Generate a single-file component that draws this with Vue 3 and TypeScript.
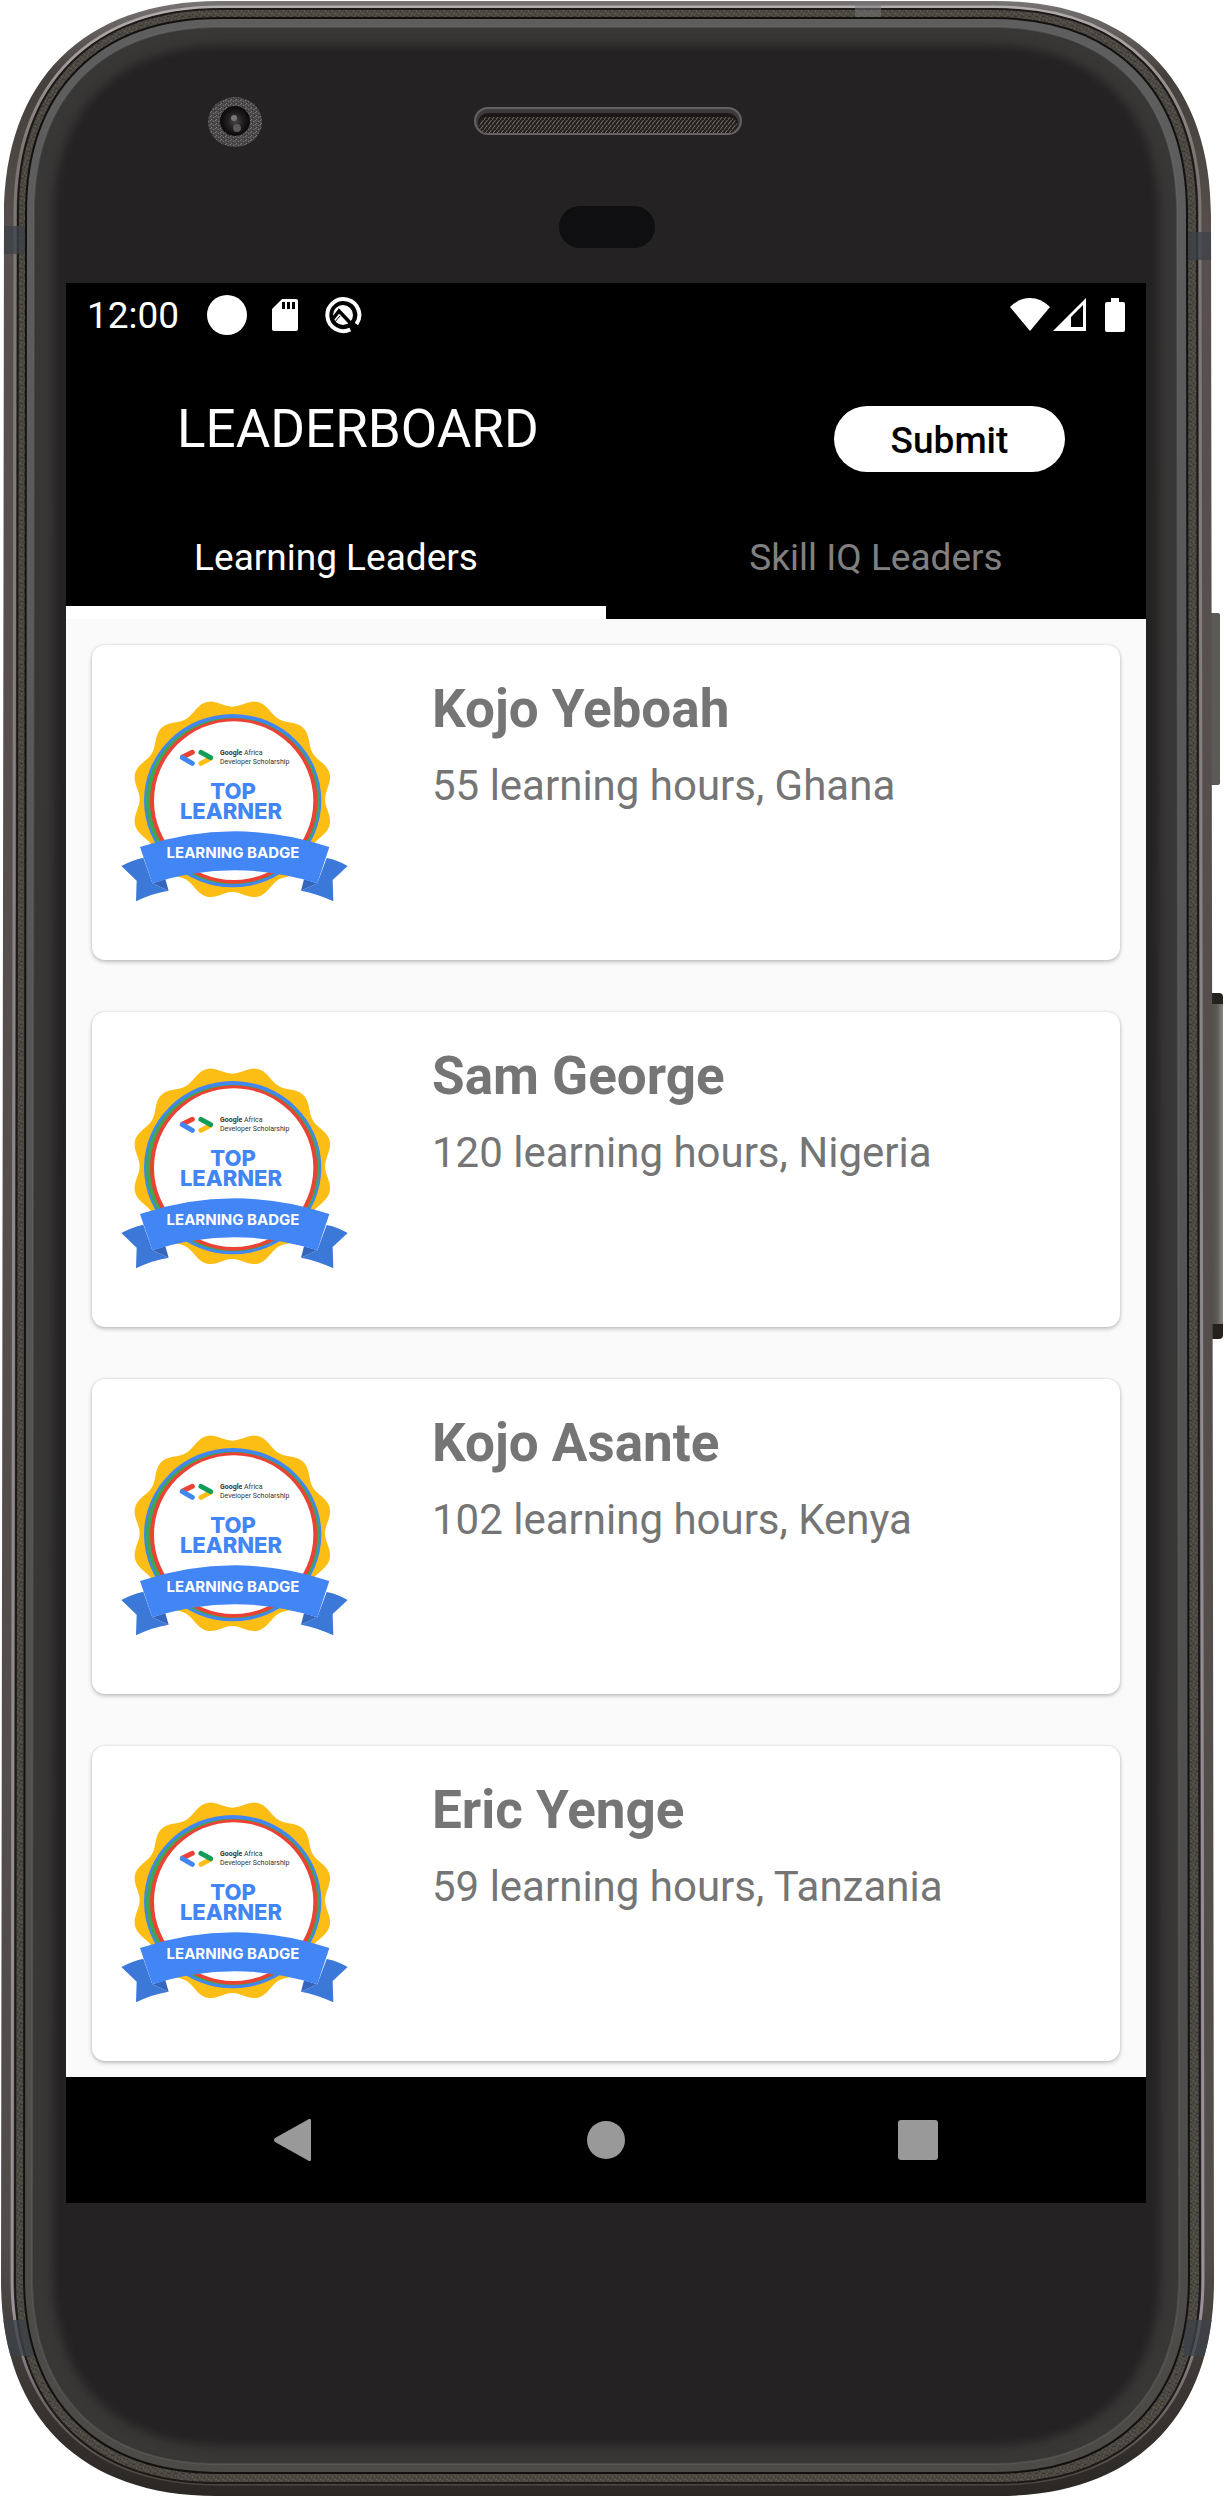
<script setup lang="ts">
import { ref } from 'vue'

interface Leader {
  name: string
  hours: number
  country: string
}

const tabs = ['Learning Leaders', 'Skill IQ Leaders']
const activeTab = ref(0)

const leaders: Leader[] = [
  { name: 'Kojo Yeboah', hours: 55, country: 'Ghana' },
  { name: 'Sam George', hours: 120, country: 'Nigeria' },
  { name: 'Kojo Asante', hours: 102, country: 'Kenya' },
  { name: 'Eric Yenge', hours: 59, country: 'Tanzania' },
]

// Closed outline of the phone body; the sides lean out by `lean` towards the bottom.
function shell(left: number, top: number, right: number, bottom: number, r: number, lean = 3): string {
  const k = r * 0.37
  const lb = left - lean
  const rb = right + lean
  return [
    `M${left} ${top + r}`,
    `C${left} ${top + k} ${left + k} ${top} ${left + r} ${top}`,
    `L${right - r} ${top}`,
    `C${right - k} ${top} ${right} ${top + k} ${right} ${top + r}`,
    `L${rb} ${bottom - r}`,
    `C${rb} ${bottom - k} ${rb - k} ${bottom} ${rb - r} ${bottom}`,
    `L${lb + r} ${bottom}`,
    `C${lb + k} ${bottom} ${lb} ${bottom - k} ${lb} ${bottom - r}`,
    'Z',
  ].join(' ')
}

const body = shell(4, 1, 1211, 2496, 215)
const rim = shell(15, 7, 1200, 2484, 206)
const grain = shell(18, 9, 1197, 2483, 203)
const glassEdge = shell(26, 18, 1187, 2473, 195, 2)
const glass = shell(34, 27, 1177, 2464, 186, 2)
const face = shell(54, 45, 1159, 2446, 172, 1)

// Twelve-lobed rosette behind the badge.
function rosette(cx: number, cy: number, radius: number, wave: number): string {
  const points: string[] = []
  for (let deg = 0; deg < 360; deg += 2) {
    const a = (deg * Math.PI) / 180
    const r = radius - wave * Math.cos(12 * a)
    points.push(`${(cx + r * Math.sin(a)).toFixed(1)},${(cy - r * Math.cos(a)).toFixed(1)}`)
  }
  return points.join(' ')
}

const scallop = rosette(367, 328, 290, 12)
</script>

<template>
  <main class="phone">
    <svg class="chassis" viewBox="0 0 1224 2498" preserveAspectRatio="none" aria-hidden="true">
      <defs>
        <linearGradient id="metal" x1="0" y1="0" x2="0" y2="1">
          <stop offset="0" stop-color="#777373" />
          <stop offset="0.03" stop-color="#45403c" />
          <stop offset="0.1" stop-color="#57504e" />
          <stop offset="0.9" stop-color="#514b49" />
          <stop offset="1" stop-color="#2b2724" />
        </linearGradient>
        <linearGradient id="shine" x1="0" y1="0" x2="0" y2="1">
          <stop offset="0" stop-color="#b3aeae" />
          <stop offset="0.06" stop-color="#7b7573" />
          <stop offset="0.5" stop-color="#8d888b" />
          <stop offset="0.93" stop-color="#979297" />
          <stop offset="1" stop-color="#4a4641" />
        </linearGradient>
        <linearGradient id="bevel" x1="0" y1="0" x2="0" y2="1">
          <stop offset="0" stop-color="#5f5e5e" />
          <stop offset="0.5" stop-color="#555555" />
          <stop offset="1" stop-color="#4b4a46" />
        </linearGradient>
        <linearGradient id="key" x1="0" y1="0" x2="1" y2="0">
          <stop offset="0" stop-color="#4a4742" />
          <stop offset="0.6" stop-color="#5d5a55" />
          <stop offset="1" stop-color="#8a8583" />
        </linearGradient>
        <radialGradient id="lens">
          <stop offset="0" stop-color="#4a4848" />
          <stop offset="0.5" stop-color="#222020" />
          <stop offset="1" stop-color="#0a0909" />
        </radialGradient>
        <pattern id="speckle" width="7" height="9" patternUnits="userSpaceOnUse">
          <rect width="7" height="9" fill="#4b4841" />
          <path d="M0 0h1v1H0zM3 1h1v2H3zM5 4h2v1H5zM1 5h1v1H1zM4 7h1v1H4z" fill="#5d5a52" />
          <path d="M1 2h1v1H1zM5 1h1v1H5zM3 5h1v1H3zM0 7h2v1H0zM6 7h1v1H6z" fill="#3a3731" />
        </pattern>
        <pattern id="mesh" width="4" height="5" patternUnits="userSpaceOnUse">
          <rect width="4" height="5" fill="#24211f" />
          <path d="M-1 6L5 -2M-1 1L1 -1M3 6L5 4" stroke="#77736f" stroke-width="1" />
        </pattern>
        <pattern id="grit" width="5" height="4" patternUnits="userSpaceOnUse">
          <rect width="5" height="4" fill="#4c4a4b" />
          <path d="M0 0h1v1H0zM3 1h1v1H3zM1 3h1v1H1z" fill="#777475" />
          <path d="M2 2h1v1H2zM4 3h1v1H4z" fill="#343233" />
        </pattern>
        <filter id="soft" x="-5%" y="-5%" width="110%" height="110%" color-interpolation-filters="sRGB">
          <feGaussianBlur stdDeviation="5" />
        </filter>
        <clipPath id="body-clip"><path :d="body" /></clipPath>
      </defs>

      <rect x="1208" y="613" width="12" height="172" rx="2" fill="#5b5a56" />
      <rect x="1208" y="993" width="15" height="346" rx="4" fill="#24211f" />
      <rect x="1208" y="1004" width="15" height="320" rx="1" fill="url(#key)" />

      <path :d="body" fill="url(#metal)" />
      <path :d="rim" fill="none" stroke="url(#shine)" stroke-width="3" />
      <path :d="grain" fill="url(#speckle)" stroke="#1c1917" stroke-width="2" />
      <g clip-path="url(#body-clip)" fill="#3c4148" fill-opacity="0.75">
        <rect x="0" y="226" width="30" height="28" />
        <rect x="1186" y="232" width="30" height="28" />
        <rect x="855" y="0" width="26" height="17" fill="#77777a" fill-opacity="0.5" />
        <rect x="0" y="2320" width="40" height="36" />
        <rect x="1184" y="2320" width="40" height="36" />
      </g>
      <path :d="glassEdge" fill="url(#bevel)" stroke="#12110f" stroke-width="2" />
      <path :d="glass" fill="#383735" stroke="#6c6c6c" stroke-opacity="0.35" stroke-width="2" />
      <path :d="face" fill="#242223" filter="url(#soft)" />

      <ellipse cx="235" cy="122" rx="27" ry="25" fill="url(#grit)" />
      <circle cx="235" cy="121" r="15" fill="url(#lens)" />
      <circle cx="234" cy="118" r="3" fill="#777" />
      <circle cx="237" cy="128" r="4" fill="#5b5959" />

      <rect x="475" y="108" width="266" height="26" rx="13" fill="#3c3a3b" stroke="#636161" stroke-width="2" />
      <rect x="478" y="113" width="260" height="20" rx="10" fill="#1b1817" />
      <rect x="479" y="117" width="258" height="16" rx="8" fill="url(#mesh)" />
      <rect x="559" y="206" width="96" height="42" rx="21" fill="#0f0f11" />
    </svg>

    <section class="screen">
      <div class="status">
        <span class="clock">12:00</span>
        <svg class="dot" viewBox="0 0 40 40" aria-hidden="true"><circle cx="20" cy="20" r="20" /></svg>
        <svg class="card-icon" viewBox="0 0 26 32" aria-hidden="true">
          <path fill-rule="evenodd" d="M10 0H24Q26 0 26 2V30Q26 32 24 32H2Q0 32 0 30V10ZM10 3V10H13V3ZM15 3V10H18V3ZM20 3V10H23V3Z" />
        </svg>
        <svg class="q-icon" viewBox="-19 -19 38 38" aria-hidden="true">
          <path d="M9 13.5A16 16 0 1 1 14.5 7.5" fill="none" stroke="#fff" stroke-width="4" transform="rotate(7)" />
          <circle r="10" />
          <path d="M-11 5L-4 -4L13 14" fill="none" stroke="#000" stroke-width="3.5" />
          <path d="M-9 8L-3 1" fill="none" stroke="#000" stroke-width="1" />
        </svg>
        <svg class="wifi" viewBox="0 0 40 33" aria-hidden="true">
          <path d="M20 33L0 9Q9 0 20 0T40 9Z" />
        </svg>
        <svg class="signal" viewBox="0 0 33 33" aria-hidden="true">
          <path fill-rule="evenodd" d="M0 33L33 0V33ZM18 19V29H30V7Z" />
        </svg>
        <svg class="battery" viewBox="0 0 20 34" aria-hidden="true">
          <path d="M6 0H14V4H18Q20 4 20 6V32Q20 34 18 34H2Q0 34 0 32V6Q0 4 2 4H6Z" />
        </svg>
      </div>

      <header class="app-bar">
        <h1>LEADERBOARD</h1>
        <button class="submit" type="button">Submit</button>
      </header>

      <nav class="tabs" role="tablist" aria-label="Leaderboards">
        <button
          v-for="(tab, i) in tabs"
          :key="tab"
          type="button"
          role="tab"
          class="tab"
          :class="{ active: i === activeTab }"
          :aria-selected="i === activeTab"
          @click="activeTab = i"
        >
          {{ tab }}
        </button>
      </nav>

      <ul class="leaders">
        <li v-for="leader in leaders" :key="leader.name" class="leader">
          <svg class="badge" viewBox="0 0 250 220" role="img" aria-label="Top learner badge">
            <g transform="scale(0.33333)">
              <polygon :points="scallop" fill="#fcbe14" />
              <ellipse cx="368" cy="332" rx="266" ry="260" fill="#4285f4" />
              <ellipse cx="368" cy="333" rx="260" ry="250" fill="#3fa652" />
              <ellipse cx="371" cy="333" rx="251" ry="248" fill="#ea4335" />
              <ellipse cx="371" cy="332" rx="239" ry="238" fill="#fff" />
              <g fill="none" stroke-width="15" stroke-linecap="round">
                <path d="M247 187L218 201" stroke="#ea4335" />
                <path d="M217 203L247 220" stroke="#4285f4" />
                <path d="M273 220L301 205" stroke="#fcbe14" />
                <path d="M273 187L302 203" stroke="#0f9d58" />
              </g>
              <g fill="#3c78d8">
                <path d="M34 528Q64 511 100 503L127 580L176 602Q126 610 78 634L80 572Z" />
                <path d="M713 528Q685 511 650 504L622 580L573 602Q621 611 670 634L668 570Z" />
              </g>
              <g fill="#3566bd">
                <path d="M127 580L166 568L176 602Z" />
                <path d="M622 580L582 568L573 602Z" />
              </g>
              <path d="M90 471Q374 377 658 471L622 580Q374 501 127 580Z" fill="#4285f4" />
            </g>
            <text class="org">
              <tspan class="org-name" x="110" y="65">Google</tspan> Africa
              <tspan x="110" y="74">Developer Scholarship</tspan>
            </text>
            <text class="award">
              <tspan x="123" y="109">TOP</tspan>
              <tspan x="121" y="129">LEARNER</tspan>
            </text>
            <text class="ribbon" x="123" y="168">LEARNING BADGE</text>
          </svg>
          <div class="details">
            <h2>{{ leader.name }}</h2>
            <p>{{ leader.hours }} learning hours, {{ leader.country }}</p>
          </div>
        </li>
      </ul>

      <footer class="system-nav">
        <button type="button" aria-label="Back">
          <svg viewBox="0 0 42 42" aria-hidden="true"><path d="M36 0Q38 -1 38 2V40Q38 43 36 42L2 23Q0 21 2 19Z" /></svg>
        </button>
        <button type="button" aria-label="Home">
          <svg viewBox="0 0 42 42" aria-hidden="true"><circle cx="21" cy="21" r="19" /></svg>
        </button>
        <button type="button" aria-label="Recent apps">
          <svg viewBox="0 0 42 42" aria-hidden="true"><rect x="1" y="1" width="40" height="40" rx="3" /></svg>
        </button>
      </footer>
    </section>
  </main>
</template>

<style>
body {
  margin: 0;
  background: #fff;
}
</style>

<style scoped>
.phone {
  position: relative;
  box-sizing: border-box;
  padding: 283px 78px 295px 66px;
  font-family: Roboto, 'Liberation Sans', sans-serif;
}

.chassis {
  position: absolute;
  inset: 0;
  width: 100%;
  height: 100%;
}

.screen {
  position: relative;
  background: #000;
  color: #fff;
}

button {
  border: 0;
  padding: 0;
  font-family: inherit;
  cursor: pointer;
}

.status {
  display: flex;
  align-items: center;
  height: 63px;
  padding: 0 21px;
}

.status svg {
  flex: none;
  fill: #fff;
}

.clock {
  padding-top: 2px;
  font-size: 37px;
  line-height: 44px;
}

.dot {
  width: 40px;
  height: 40px;
  margin-left: 28px;
}

.card-icon {
  width: 26px;
  height: 32px;
  margin-left: 25px;
}

.q-icon {
  width: 38px;
  height: 38px;
  margin-left: 26px;
}

.wifi {
  width: 40px;
  height: 33px;
  margin-left: auto;
}

.signal {
  width: 33px;
  height: 33px;
  margin-left: 3px;
}

.battery {
  width: 20px;
  height: 34px;
  margin-left: 19px;
}

.app-bar {
  display: flex;
  align-items: flex-start;
  justify-content: space-between;
  height: 95px;
  padding: 52px 81px 0 111px;
}

h1 {
  margin: 0;
  font-size: 53px;
  font-weight: 400;
  line-height: 62px;
}

.submit {
  width: 231px;
  height: 66px;
  margin-top: 8px;
  padding-top: 3px;
  border-radius: 33px;
  background: #fff;
  color: #000;
  font-size: 37px;
  font-weight: 500;
  line-height: 44px;
}

.tabs {
  display: flex;
}

.tab {
  flex: 1;
  height: 126px;
  padding-top: 3px;
  background: #000;
  color: #808080;
  font-size: 37px;
  line-height: 44px;
}

.tab.active {
  color: #fff;
  box-shadow: inset 0 -13px #fff;
}

.leaders {
  display: flex;
  flex-direction: column;
  gap: 52px;
  margin: 0;
  padding: 26px 26px 16px;
  list-style: none;
  background: #fafafa;
}

.leader {
  display: flex;
  gap: 72px;
  min-height: 315px;
  box-sizing: border-box;
  padding: 33px 18px 0;
  border-radius: 13px;
  background: #fff;
  box-shadow: 0 2px 4px rgba(0, 0, 0, 0.22), 0 0 3px rgba(0, 0, 0, 0.12);
}

.badge {
  flex: none;
  width: 250px;
  height: 220px;
  margin-top: 12px;
}

.badge text {
  font-family: Inter, 'Liberation Sans', sans-serif;
}

.badge .org {
  fill: #333;
  font-family: Roboto, sans-serif;
  font-size: 7px;
}

.org-name {
  font-weight: 700;
}

.award {
  fill: #4285f4;
  font-size: 22px;
  font-weight: 800;
  text-anchor: middle;
}

.ribbon {
  fill: #fff;
  font-size: 15px;
  font-weight: 700;
  text-anchor: middle;
}

.details {
  color: #757575;
}

h2 {
  margin: 0 0 21px;
  font-size: 53px;
  font-weight: 700;
  line-height: 62px;
}

p {
  margin: 0;
  font-size: 42px;
  line-height: 50px;
}

.system-nav {
  display: grid;
  grid-template-columns: repeat(3, 1fr);
  height: 126px;
  padding: 0 72px;
}

.system-nav button {
  display: flex;
  align-items: center;
  justify-content: center;
  background: none;
}

.system-nav svg {
  width: 42px;
  height: 42px;
  fill: #999;
}
</style>
